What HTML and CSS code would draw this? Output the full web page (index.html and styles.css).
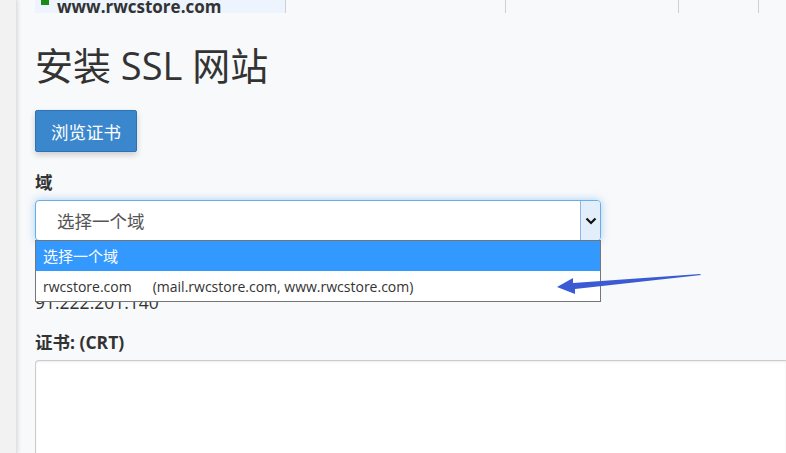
FILE: index.html
```html
<!DOCTYPE HTML>
<html>
  <head>
  <meta charset="UTF-8">
  <title>安装 SSL 网站</title>
  <link rel="stylesheet" href="styles.css">
  </head>

  <body>
    <div class="sidebar"></div>
    <div class="main">
      <div class="toprow">
        <div class="cell first"><span class="dot"></span>www.rwcstore.com</div>
        <div class="cell c2"></div>
        <div class="cell c3"></div>
        <div class="cell c4"></div>
        <div class="cell c5"></div>
      </div>

      <h1>安装 SSL 网站</h1>
      <button class="btn">浏览证书</button>

      <label class="lbl">域</label>
      <div class="selwrap">
        <div class="select">
          <span>选择一个域</span>
          <span class="arrow">
            <svg width="12" height="8" viewBox="0 0 12 8"><path d="M1.5 1.5 L6 6 L10.5 1.5" fill="none" stroke="#111" stroke-width="2.2"/></svg>
          </span>
        </div>
        <ul class="dropdown">
          <li class="on">选择一个域</li>
          <li>rwcstore.com<span class="alt">(mail.rwcstore.com, www.rwcstore.com)</span></li>
        </ul>
      </div>
      <div class="ip">91.222.201.140</div>

      <label class="lbl crtlbl">证书: (CRT)</label>
      <div class="crt"></div>
    </div>

    <svg class="pointer" width="786" height="453" viewBox="0 0 786 453">
      <polygon points="557,287 573,278 573,283 700,274 701,275 575,289 575,294" fill="#3a5bd4"/>
    </svg>
  </body>
</html>
```

FILE: styles.css
```css
body {
  margin: 0;
  background: #f8f9fb;
  font-family: "Open Sans", "Noto Sans CJK SC", sans-serif;
  color: #333;
  display: flex;
  overflow: hidden;
  height: 453px;
}
.sidebar {
  width: 16px;
  flex: none;
  background: #f2f2f2;
  box-shadow: 1px 0 4px rgba(0,0,0,.12);
  border-right: 1px solid #e2e2e2;
}
.main {
  flex: 1;
  padding-left: 18px;
  min-width: 0;
}

.toprow { display: flex; height: 13px; overflow: hidden; }
.cell {
  height: 13px;
  border-right: 1px solid #cfcfcf;
  display: flex;
  align-items: flex-end;
  overflow: hidden;
}
.first {
  width: 251px;
  background: #edf4fd;
  font-weight: bold;
  font-size: 17px;
  line-height: 12px;
  padding-left: 6px;
  box-sizing: border-box;
  color: #333;
  white-space: nowrap;
}
.first .dot {
  display: inline-block;
  width: 8px; height: 8px;
  background: #1a8a1a;
  margin-right: 8px;
  margin-bottom: 8px;
}
.c2 { width: 219px; }
.c3 { width: 172px; }
.c4 { width: 79px; }
.c5 { flex: 1; border-right: none; }

h1 {
  font-size: 38px;
  font-weight: 400;
  line-height: 42px;
  margin: 31px 0 0;
  color: #333;
}
.btn {
  display: block;
  margin-top: 24px;
  width: 102px;
  height: 42px;
  background: #3a87cd;
  border: 1px solid #2f72b4;
  border-radius: 2px;
  color: #fff;
  font-family: inherit;
  font-size: 17.5px;
  box-shadow: 0 3px 6px rgba(0,0,0,.18);
}
.lbl {
  display: block;
  font-weight: bold;
  font-size: 17.5px;
  line-height: 22px;
  margin-top: 19px;
  margin-bottom: 7px;
}
.selwrap { position: relative; width: 566px; }
.select {
  height: 39px;
  background: #fff;
  border: 1px solid #66afe9;
  border-radius: 4px;
  box-shadow: 0 0 8px rgba(102,175,233,.55);
  display: flex;
  align-items: center;
  justify-content: space-between;
  padding-left: 21px;
  font-size: 17.5px;
  color: #555;
}
.arrow {
  align-self: stretch;
  width: 19px;
  background: #e3eefb;
  border-left: 1px solid #8db8e6;
  border-radius: 0 3px 3px 0;
  display: flex;
  align-items: center;
  justify-content: center;
}
.dropdown {
  position: absolute;
  top: 40px;
  left: 0;
  width: 564px;
  margin: 0;
  padding: 0;
  list-style: none;
  background: #fff;
  border: 1px solid #767676;
  font-size: 14px;
  z-index: 10;
}
.dropdown li {
  height: 30px;
  line-height: 31px;
  padding-left: 7px;
  color: #333;
}
.dropdown li.on { background: #3399ff; color: #fff; font-size: 15px; }
.alt { margin-left: 21px; }

.ip {
  font-size: 17.5px;
  line-height: 22px;
  margin-top: 50px;
}
.crtlbl { margin-top: 18px; }
.crt {
  height: 200px;
  background: #fff;
  border: 1px solid #ccc;
  border-right: none;
  border-radius: 4px 0 0 0;
  box-shadow: inset 0 1px 2px rgba(0,0,0,.08);
}

.pointer { position: absolute; left: 0; top: 0; pointer-events: none; z-index: 20; }
```
